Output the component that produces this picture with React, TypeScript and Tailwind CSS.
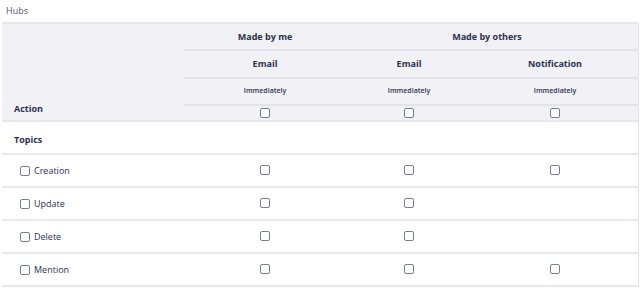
import React from 'react';

interface Row {
    label: string;
    cells: boolean[];
}

const rows: Row[] = [
    { label: 'Creation', cells: [true, true, true] },
    { label: 'Update', cells: [true, true, false] },
    { label: 'Delete', cells: [true, true, false] },
    { label: 'Mention', cells: [true, true, true] },
];

const Box: React.FC = () => (
    <span className="block w-[10px] h-[10px] rounded-[2px] border-[1.5px] border-[#777d96] bg-white" />
);

const App: React.FC = () => {
    return (
        <div className="w-[640px] h-[288px] bg-white overflow-hidden font-['Open_Sans',sans-serif] text-[#2b3052]">
            <div className="h-[22px] pl-[6px] flex items-center text-[9px] text-[#4e5574]">Hubs</div>
            <div className="ml-[2px] w-[637px] border-r border-[#e4e4ea]">
                {/* header */}
                <div className="grid grid-cols-[182px_1fr] bg-[#f2f2f6] border-t-2 border-b-2 border-[#e8e8ee]">
                    <div className="flex items-end pl-[12px] pb-[5px] text-[9px] font-bold">Action</div>
                    <div className="flex flex-col">
                        <div className="grid grid-cols-[162px_1fr] h-[27px] border-b-2 border-[#e3e3ea] text-[9px] font-bold">
                            <div className="flex items-center justify-center">Made by me</div>
                            <div className="flex items-center justify-center pr-[10px]">Made by others</div>
                        </div>
                        <div className="grid grid-cols-[162px_126px_1fr] h-[28px] border-b-2 border-[#e3e3ea] text-[9px] font-bold">
                            <div className="flex items-center justify-center">Email</div>
                            <div className="flex items-center justify-center">Email</div>
                            <div className="flex items-center justify-center">Notification</div>
                        </div>
                        <div className="grid grid-cols-[162px_126px_1fr] h-[27px] border-b-2 border-[#e3e3ea] text-[7px] font-semibold">
                            <div className="flex items-center justify-center">Immediately</div>
                            <div className="flex items-center justify-center">Immediately</div>
                            <div className="flex items-center justify-center">Immediately</div>
                        </div>
                        <div className="grid grid-cols-[162px_126px_1fr] h-[14px]">
                            <div className="flex items-center justify-center"><Box /></div>
                            <div className="flex items-center justify-center"><Box /></div>
                            <div className="flex items-center justify-center"><Box /></div>
                        </div>
                    </div>
                </div>
                {/* body */}
                <div className="h-[33px] flex items-center pl-[12px] pt-[4px] text-[9px] font-bold border-b-2 border-[#e8e8ee]">
                    Topics
                </div>
                {rows.map((row) => (
                    <div
                        key={row.label}
                        className="grid grid-cols-[182px_162px_126px_1fr] h-[33px] border-b-2 border-[#e8e8ee]"
                    >
                        <div className="flex items-center gap-[4px] pl-[18px] text-[9px]">
                            <Box />
                            {row.label}
                        </div>
                        {row.cells.map((on, i) => (
                            <div key={i} className="flex items-center justify-center pb-[1px]">
                                {on && <Box />}
                            </div>
                        ))}
                    </div>
                ))}
            </div>
        </div>
    );
};

export default App;
